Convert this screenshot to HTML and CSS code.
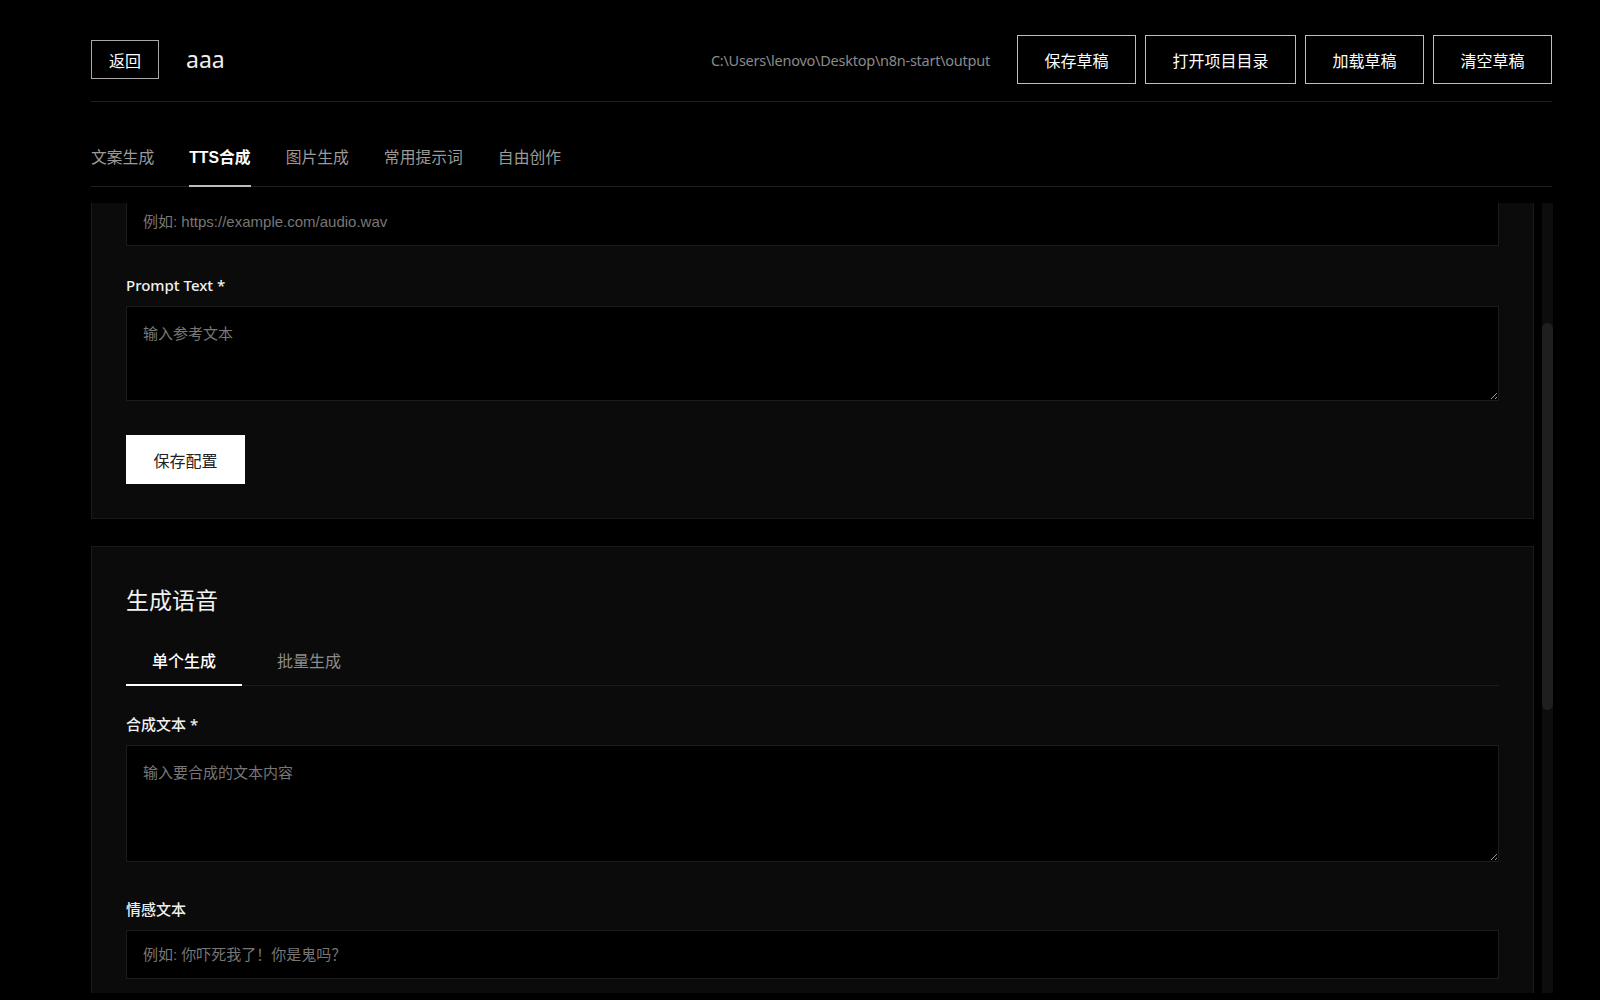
FILE: index.html
```html
<!DOCTYPE html>
<html lang="zh-CN">
<head>
<meta charset="utf-8">
<title>aaa</title>
<link rel="stylesheet" href="styles.css">
</head>
<body>
<div class="app">
  <header class="topbar">
    <div class="topbar-left">
      <button class="btn-outline btn-back">返回</button>
      <span class="project-name">aaa</span>
    </div>
    <div class="topbar-right">
      <span class="path">C:\Users\lenovo\Desktop\n8n-start\output</span>
      <button class="btn-outline">保存草稿</button>
      <button class="btn-outline">打开项目目录</button>
      <button class="btn-outline">加载草稿</button>
      <button class="btn-outline">清空草稿</button>
    </div>
  </header>

  <nav class="main-tabs">
    <span class="main-tab">文案生成</span>
    <span class="main-tab active">TTS合成</span>
    <span class="main-tab">图片生成</span>
    <span class="main-tab">常用提示词</span>
    <span class="main-tab">自由创作</span>
  </nav>

  <div class="scroll-area">
    <div class="scroll" id="scroll">
      <section class="card">
        <h3 class="card-title">TTS 配置</h3>
        <div class="form-group">
          <label class="label">API 地址 *</label>
          <input class="input" type="text" placeholder="例如: http://127.0.0.1:9880">
        </div>
        <div class="form-group">
          <label class="label">Prompt Audio URL *</label>
          <input class="input" type="text" placeholder="例如: https://example.com/audio.wav">
        </div>
        <div class="form-group area-group">
          <label class="label">Prompt Text *</label>
          <textarea class="textarea textarea-sm" placeholder="输入参考文本"></textarea>
        </div>
        <button class="btn-primary">保存配置</button>
      </section>

      <section class="card">
        <h3 class="card-title">生成语音</h3>
        <div class="subtabs">
          <span class="subtab active">单个生成</span>
          <span class="subtab">批量生成</span>
        </div>
        <div class="form-group area-group-lg">
          <label class="label">合成文本 *</label>
          <textarea class="textarea textarea-lg" placeholder="输入要合成的文本内容"></textarea>
        </div>
        <div class="form-group">
          <label class="label">情感文本</label>
          <input class="input" type="text" placeholder="例如: 你吓死我了！你是鬼吗？">
        </div>
        <div class="form-group">
          <label class="label">语速</label>
          <input class="input" type="text" placeholder="1.0">
        </div>
        <button class="btn-primary">生成语音</button>
      </section>

      <section class="card">
        <h3 class="card-title">生成结果</h3>
        <div class="empty">暂无生成结果</div>
      </section>
    </div>
    <div class="scrollbar"><div class="scrollbar-thumb"></div></div>
  </div>
</div>
<script src="script.js"></script>
</body>
</html>
```

FILE: styles.css
```css
* { box-sizing: border-box; }

html, body {
  margin: 0;
  background: #000;
}

body {
  color: #eee;
  font-family: "Noto Sans", "Noto Sans CJK SC", sans-serif;
  overflow: hidden;
}

.app {
  padding-left: 91px;
  width: 1553px;
}

/* ---------- top bar ---------- */
.topbar {
  display: flex;
  justify-content: space-between;
  align-items: center;
  width: 1461px;
  height: 102px;
  padding: 35px 0 17px;
  border-bottom: 1px solid #1f1f1f;
}

.topbar-left {
  display: flex;
  align-items: center;
  gap: 27px;
}

.topbar-right {
  display: flex;
  align-items: center;
  gap: 9px;
}

.btn-outline {
  height: 49px;
  padding: 0 26.5px;
  background: transparent;
  border: 1px solid #bdbdbd;
  color: #fff;
  font-family: "Noto Sans CJK SC", sans-serif;
  font-size: 16px;
  line-height: 1;
  cursor: pointer;
}

.btn-back {
  height: 39px;
  padding: 0 17px;
  border-color: #a8a8a8;
}

.project-name {
  font-size: 23px;
  color: #eee;
  line-height: 1;
}

.path {
  font-family: "Noto Sans", "Noto Sans CJK SC", sans-serif;
  font-size: 14.5px;
  color: #8a8a8a;
  margin-right: 18px;
  letter-spacing: -0.25px;
}

/* ---------- main tabs ---------- */
.main-tabs {
  display: flex;
  gap: 35px;
  width: 1461px;
  margin-top: 28px;
  border-bottom: 1px solid #1f1f1f;
}

.main-tab {
  padding: 16px 0 15px;
  margin-bottom: -1px;
  border-bottom: 2px solid transparent;
  font-family: "Liberation Sans", "Noto Sans CJK SC", sans-serif;
  font-size: 15.8px;
  line-height: 24px;
  color: #9a9a9a;
}

.main-tab.active {
  color: #fff;
  font-weight: 700;
  border-bottom-color: #bdbdbd;
}

/* ---------- scroll area ---------- */
.scroll-area {
  display: flex;
  gap: 8px;
  margin-top: 16px;
  height: 790px;
}

.scroll {
  width: 1443px;
  height: 790px;
  overflow: hidden;
}

.scrollbar {
  width: 11px;
  height: 790px;
  padding-top: 120px;
  background: #0d0d0d;
}

.scrollbar-thumb {
  height: 387px;
  background: #1f1f1f;
  border-radius: 6px;
}

/* ---------- cards ---------- */
.card {
  margin-bottom: 27px;
  padding: 34px;
  background: #0b0b0b;
  border: 1px solid #1a1a1a;
}

.card:last-child {
  margin-bottom: 0;
}

.card-title {
  margin: 3px 0 24px;
  font-family: "Noto Sans CJK SC", sans-serif;
  font-size: 23px;
  line-height: 30px;
  font-weight: 400;
  color: #f2f2f2;
}

.form-group {
  margin-bottom: 28px;
}

.form-group.area-group {
  margin-bottom: 34px;
}

.form-group.area-group-lg {
  margin-bottom: 36px;
}

.label {
  display: block;
  margin-bottom: 10px;
  font-family: "Noto Sans", "Noto Sans CJK SC", sans-serif;
  font-size: 15px;
  line-height: 22px;
  font-weight: 500;
  color: #f0f0f0;
}

.input,
.textarea {
  display: block;
  width: 100%;
  background: #000;
  border: 1px solid #1c1c1c;
  border-radius: 0;
  color: #eee;
  font-family: "Liberation Sans", "Noto Sans CJK SC", sans-serif;
  font-size: 15px;
  outline: none;
}

.input {
  height: 49px;
  padding: 0 16px;
}

.textarea {
  padding: 16px;
  line-height: 22px;
  resize: vertical;
  color-scheme: dark;
}

.textarea-sm { height: 95px; }
.textarea-lg { height: 117px; }

.input::placeholder,
.textarea::placeholder {
  color: #777;
}

.btn-primary {
  display: block;
  height: 49px;
  width: 119px;
  padding: 0;
  background: #fff;
  border: none;
  color: #222;
  font-family: "Noto Sans CJK SC", sans-serif;
  font-size: 16px;
  cursor: pointer;
}

/* ---------- sub tabs ---------- */
.subtabs {
  display: flex;
  gap: 9px;
  margin-bottom: 27px;
  border-bottom: 1px solid #1c1c1c;
}

.subtab {
  padding: 10px 26px 12px;
  margin-bottom: -1px;
  border-bottom: 2px solid transparent;
  font-family: "Noto Sans CJK SC", sans-serif;
  font-size: 16px;
  line-height: 24px;
  color: #8c8c8c;
}

.subtab.active {
  color: #fff;
  font-weight: 500;
  border-bottom-color: #fff;
}

.empty {
  height: 223px;
  display: flex;
  align-items: center;
  justify-content: center;
  color: #666;
  font-size: 15px;
  border: 1px dashed #1c1c1c;
}
```

FILE: script.js
```js
document.getElementById('scroll').scrollTop = 239;
```
